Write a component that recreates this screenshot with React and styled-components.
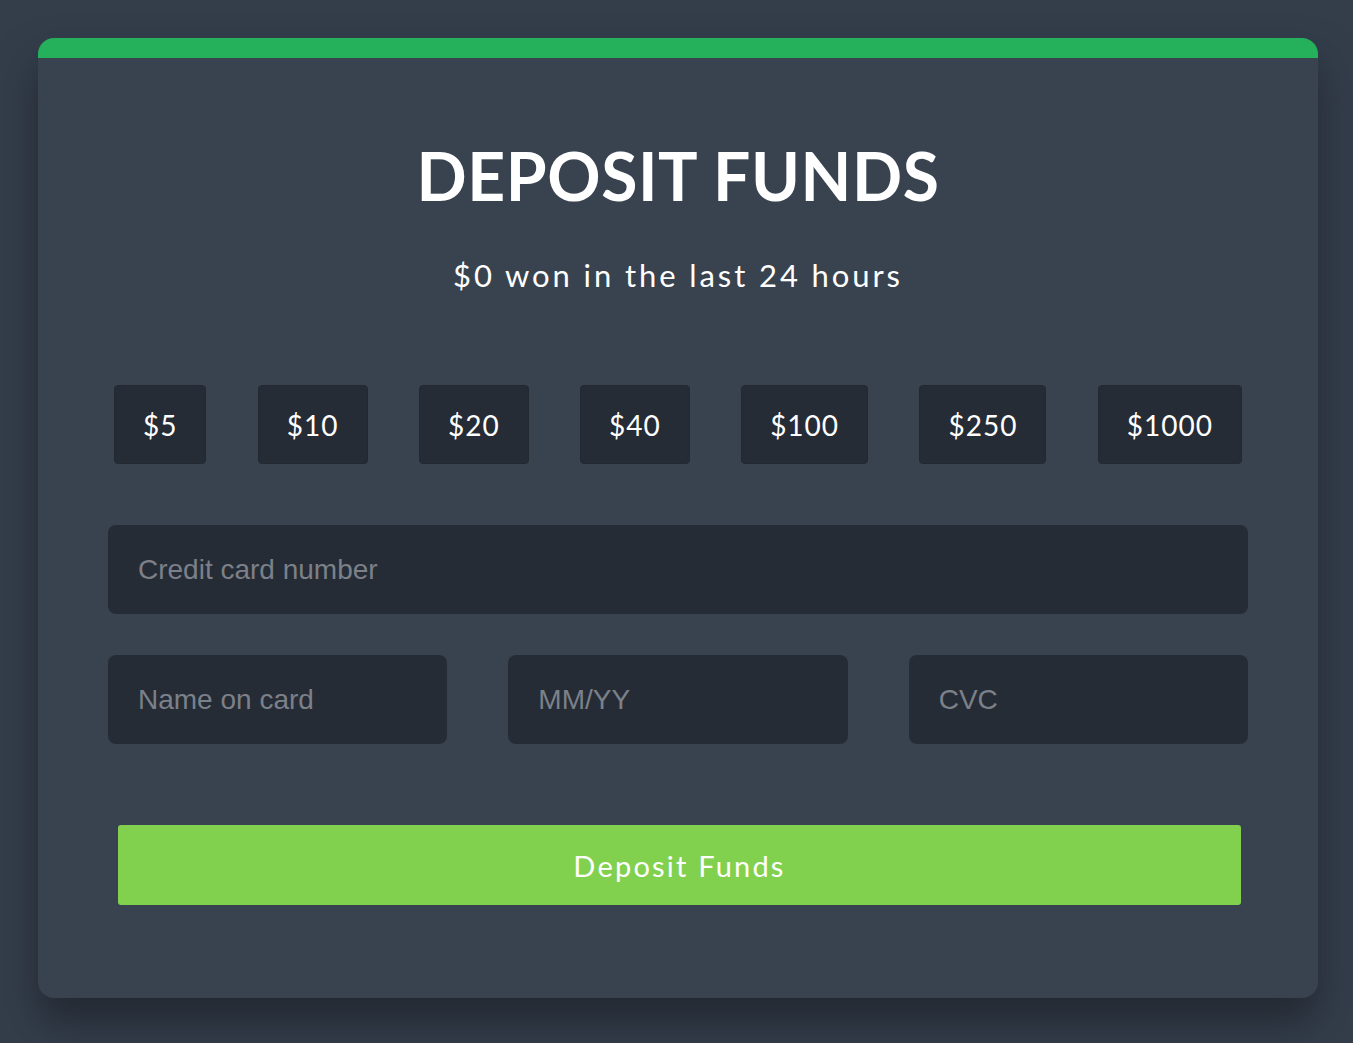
import React from "react";
import styled, { createGlobalStyle } from "styled-components";

const GlobalStyle = createGlobalStyle`
  html, body {
    margin: 0;
    padding: 0;
    background: #343e4b;
    min-height: 100%;
  }
  body {
    font-family: "Lato", "Open Sans", sans-serif;
  }
  * { box-sizing: border-box; }
`;

const Page = styled.div`
  min-height: 1043px;
  padding: 38px 35px 45px 38px;
  background: #343e4b;
`;

const Card = styled.div`
  width: 1280px;
  height: 960px;
  background: #38434f;
  border-radius: 16px;
  border-top: 20px solid #25b05c;
  box-shadow: 0 24px 40px rgba(20, 24, 30, 0.55);
  padding: 0 70px 93px;
  display: flex;
  flex-direction: column;
  align-items: stretch;
`;

const Title = styled.h1`
  margin: 78px 0 0;
  font-family: "Lato", sans-serif;
  font-weight: 700;
  font-size: 66px;
  line-height: 80px;
  letter-spacing: 0.6px;
  color: #ffffff;
  text-align: center;
`;

const Subtitle = styled.p`
  margin: 39px 0 0;
  font-family: "Lato", sans-serif;
  font-weight: 400;
  font-size: 31px;
  line-height: 40px;
  letter-spacing: 2.9px;
  color: #ffffff;
  text-align: center;
`;

const AmountRow = styled.div`
  margin-top: 90px;
  padding: 0 6px;
  display: flex;
  justify-content: space-between;
  align-items: center;
`;

const AmountButton = styled.button`
  height: 79px;
  padding: 0 28px;
  background: #262c36;
  border: 1px solid #232831;
  border-radius: 4px;
  color: #ffffff;
  font-family: "Lato", sans-serif;
  font-size: 28px;
  letter-spacing: 1px;
  cursor: pointer;
`;

const Field = styled.input`
  width: 100%;
  height: 89px;
  background: #262c36;
  border: none;
  border-radius: 8px;
  padding: 0 30px;
  color: #ffffff;
  font-family: "Liberation Sans", Arial, sans-serif;
  font-size: 28px;
  outline: none;
  &::placeholder {
    color: #7b8089;
  }
`;

const FullField = styled.div`
  margin-top: 61px;
`;

const FieldGrid = styled.div`
  margin-top: 41px;
  display: grid;
  grid-template-columns: repeat(3, 1fr);
  column-gap: 61px;
`;

const SubmitButton = styled.button`
  margin: 81px 7px 0 10px;
  height: 80px;
  background: #81d14f;
  border: none;
  border-radius: 3px;
  color: #ffffff;
  font-family: "Lato", sans-serif;
  font-size: 29px;
  letter-spacing: 2.2px;
  cursor: pointer;
`;

const amounts = ["$5", "$10", "$20", "$40", "$100", "$250", "$1000"];

export default function App() {
  return (
    <>
      <GlobalStyle />
      <Page>
        <Card>
          <Title>DEPOSIT FUNDS</Title>
          <Subtitle>$0 won in the last 24 hours</Subtitle>
          <AmountRow>
            {amounts.map((a) => (
              <AmountButton key={a}>{a}</AmountButton>
            ))}
          </AmountRow>
          <FullField>
            <Field placeholder="Credit card number" />
          </FullField>
          <FieldGrid>
            <Field placeholder="Name on card" />
            <Field placeholder="MM/YY" />
            <Field placeholder="CVC" />
          </FieldGrid>
          <SubmitButton>Deposit Funds</SubmitButton>
        </Card>
      </Page>
    </>
  );
}
